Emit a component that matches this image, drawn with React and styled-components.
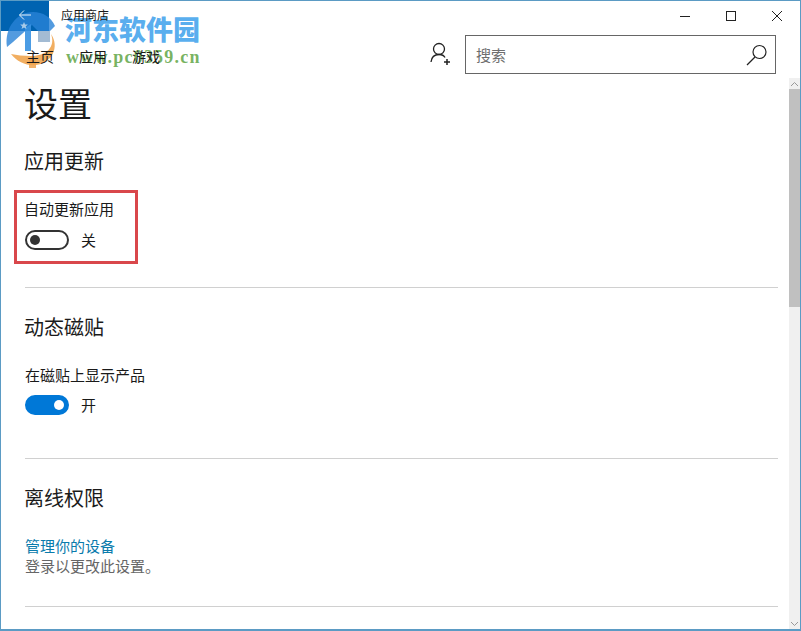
import React from "react";
import styled, { createGlobalStyle } from "styled-components";

const GlobalStyle = createGlobalStyle`
  html, body {
    margin: 0;
    padding: 0;
    background: #fff;
  }
  body {
    font-family: "Noto Sans CJK SC", "Liberation Sans", sans-serif;
    color: #1a1a1a;
  }
`;

const Window = styled.div`
  width: 801px;
  height: 631px;
  box-sizing: border-box;
  position: relative;
  overflow: hidden;
  background: #fff;
  border: 1px solid #5b9bc4;
  border-bottom-width: 2px;
  display: flex;
  flex-direction: column;
`;

const TitleBar = styled.div`
  height: 30px;
  flex: none;
  display: flex;
  align-items: stretch;
`;

const BackButton = styled.div`
  width: 48px;
  background: #0063b1;
  display: flex;
  align-items: center;
  justify-content: center;

  svg {
    position: relative;
    z-index: 1;
    margin-top: -3px;
  }
`;

const AppTitle = styled.div`
  margin-left: 12px;
  font-size: 12px;
  line-height: 28px;
  flex: 1;
  position: relative;
  z-index: 1;
`;

const WinButton = styled.div`
  width: 46px;
  display: flex;
  align-items: center;
  justify-content: center;
  margin-top: -1px;
`;

const NavBar = styled.div`
  height: 48px;
  flex: none;
  display: flex;
  align-items: center;
  padding: 0 24px 0 25px;
`;

const NavLinks = styled.div`
  display: flex;
  gap: 25px;
  flex: 1;
  font-size: 14px;
  margin-top: 1px;
  position: relative;
  z-index: 1;
`;

const UserIcon = styled.div`
  width: 26px;
  height: 26px;
  margin-right: 11px;
  margin-top: -2px;
`;

const SearchBox = styled.div`
  width: 311px;
  height: 39px;
  box-sizing: border-box;
  border: 1px solid #666;
  display: flex;
  align-items: center;
  justify-content: space-between;
  padding: 0 6px 0 10px;
  font-size: 15px;
  color: #6e6e6e;
  margin-top: -1px;
`;

const Body = styled.div`
  flex: 1;
  display: flex;
  min-height: 0;
`;

const Content = styled.div`
  flex: 1;
  padding: 0 11px 0 24px;
  min-width: 0;
`;

const PageTitle = styled.h1`
  margin: -1px 0 0 -1px;
  font-size: 34px;
  font-weight: 400;
  line-height: 50px;
`;

const SectionTitle = styled.h2`
  margin: ${(props) => props.$top}px 0 0 -1px;
  font-size: 20px;
  font-weight: 400;
  line-height: 30px;
`;

const Label = styled.div`
  font-size: 15px;
  line-height: 20px;
  margin-top: ${(props) => props.$top}px;
  margin-left: ${(props) => props.$left || 0}px;
`;

const ToggleRow = styled.div`
  display: flex;
  align-items: center;
  gap: 12px;
  margin-top: ${(props) => props.$top}px;
  font-size: 15px;
  line-height: 20px;
`;

const Track = styled.div`
  width: 44px;
  height: 20px;
  box-sizing: border-box;
  border-radius: 10px;
  border: 2px solid ${(props) => (props.$on ? "#0078d7" : "#333")};
  background: ${(props) => (props.$on ? "#0078d7" : "#fff")};
  display: flex;
  align-items: center;
  justify-content: ${(props) => (props.$on ? "flex-end" : "flex-start")};
  padding: 0 3px;
`;

const Knob = styled.div`
  width: 10px;
  height: 10px;
  border-radius: 50%;
  background: ${(props) => (props.$on ? "#fff" : "#333")};
`;

const Divider = styled.hr`
  border: 0;
  height: 1px;
  background: #d0d0d0;
  margin: ${(props) => props.$top}px 0 0;
`;

const DeviceLink = styled.div`
  font-size: 15px;
  line-height: 20px;
  color: #0a7bac;
  margin-top: 23px;
`;

const Note = styled.div`
  font-size: 15px;
  line-height: 20px;
  color: #666;
`;

const ScrollBar = styled.div`
  width: 11px;
  flex: none;
  background: #f0f0f0;
  display: flex;
  flex-direction: column;
  align-items: center;
  margin-top: -1px;
`;

const ScrollArrow = styled.div`
  height: 11px;
  flex: none;
  display: flex;
  align-items: center;
  justify-content: center;
`;

const ScrollThumb = styled.div`
  width: 100%;
  height: 218px;
  background: #c0c0c0;
`;

const ScrollGap = styled.div`
  flex: 1;
`;

const HighlightBox = styled.div`
  position: absolute;
  left: 13px;
  top: 189px;
  width: 124px;
  height: 74px;
  box-sizing: border-box;
  border: 3px solid #d9474b;
`;

const Watermark = styled.div`
  position: absolute;
  left: 0;
  top: 0;
  width: 210px;
  height: 72px;
  pointer-events: none;
`;

const WatermarkName = styled.div`
  position: absolute;
  left: 64px;
  top: 10px;
  font-family: "Noto Sans CJK SC", sans-serif;
  font-weight: 900;
  font-size: 27px;
  line-height: 36px;
  white-space: nowrap;
  color: rgba(60, 160, 235, 0.85);
`;

const WatermarkUrl = styled.div`
  position: absolute;
  left: 65px;
  top: 46px;
  font-family: "Liberation Serif", serif;
  font-weight: 700;
  font-size: 18px;
  line-height: 20px;
  letter-spacing: 1.2px;
  white-space: nowrap;
  color: rgba(95, 165, 70, 0.85);
`;

const App = () => {
  return (
    <Window>
      <GlobalStyle />
      <TitleBar>
        <BackButton>
          <svg width="14" height="12" viewBox="0 0 14 12" fill="none" stroke="#e8f2fa" strokeWidth="1">
            <path d="M13 6H1.500M6 1.500L1.500 6L6 10.500" />
          </svg>
        </BackButton>
        <AppTitle>应用商店</AppTitle>
        <WinButton>
          <svg width="12" height="12" viewBox="0 0 12 12" fill="none" stroke="#222" strokeWidth="1">
            <path d="M1 6.500H11" />
          </svg>
        </WinButton>
        <WinButton>
          <svg width="12" height="12" viewBox="0 0 12 12" fill="none" stroke="#222" strokeWidth="1">
            <rect x="1.500" y="1.500" width="9" height="9" />
          </svg>
        </WinButton>
        <WinButton>
          <svg width="12" height="12" viewBox="0 0 12 12" fill="none" stroke="#222" strokeWidth="1">
            <path d="M1 1L11 11M11 1L1 11" />
          </svg>
        </WinButton>
      </TitleBar>
      <NavBar>
        <NavLinks>
          <span>主页</span>
          <span>应用</span>
          <span>游戏</span>
        </NavLinks>
        <UserIcon>
          <svg width="26" height="26" viewBox="0 0 26 26" fill="none" stroke="#222" strokeWidth="1.3">
            <circle cx="11" cy="8" r="5.500" />
            <path d="M3 21c.5-4.500 3-7.500 8-7.500 3 0 5 1 6 3" />
            <path d="M19 18v6M16 21h6" strokeWidth="1.500" />
          </svg>
        </UserIcon>
        <SearchBox>
          <span>搜索</span>
          <svg width="24" height="24" viewBox="0 0 24 24" fill="none" stroke="#222" strokeWidth="1.2">
            <circle cx="14.500" cy="9" r="6.500" />
            <path d="M10 14L2 22" />
          </svg>
        </SearchBox>
      </NavBar>
      <Body>
        <Content>
          <PageTitle>设置</PageTitle>
          <SectionTitle $top={18}>应用更新</SectionTitle>
          <Label $top={23} $left={-1}>自动更新应用</Label>
          <ToggleRow $top={11}>
            <Track>
              <Knob />
            </Track>
            <span>关</span>
          </ToggleRow>
          <Divider $top={37} />
          <SectionTitle $top={24}>动态磁贴</SectionTitle>
          <Label $top={23}>在磁贴上显示产品</Label>
          <ToggleRow $top={10}>
            <Track $on>
              <Knob $on />
            </Track>
            <span>开</span>
          </ToggleRow>
          <Divider $top={43} />
          <SectionTitle $top={24}>离线权限</SectionTitle>
          <DeviceLink>管理你的设备</DeviceLink>
          <Note>登录以更改此设置。</Note>
          <Divider $top={30} />
        </Content>
        <ScrollBar>
          <ScrollArrow>
            <svg width="9" height="6" viewBox="0 0 9 6" fill="none" stroke="#999" strokeWidth="1">
              <path d="M1 5L4.500 1.500L8 5" />
            </svg>
          </ScrollArrow>
          <ScrollThumb />
          <ScrollGap />
          <ScrollArrow>
            <svg width="9" height="6" viewBox="0 0 9 6" fill="none" stroke="#999" strokeWidth="1">
              <path d="M1 1L4.500 4.500L8 1" />
            </svg>
          </ScrollArrow>
        </ScrollBar>
      </Body>
      <HighlightBox />
      <Watermark>
        <svg width="64" height="72" viewBox="0 0 64 72">
          <path d="M6 46C3 27 16 11 32 11c10 0 18 5 22 14l-5 5H37l-6-6-19 17z" fill="rgba(40,130,215,0.8)" />
          <path d="M24 27l6-4v27h-6z" fill="rgba(55,145,225,0.9)" />
          <path d="M37 30h12v11H37z" fill="rgba(140,170,200,0.8)" />
          <path d="M50 33c5 13-5 22-20 22-8 0-14-1-20-2 6 8 16 12 25 11 16-2 24-18 15-31z" fill="rgba(240,165,80,0.9)" />
          <path d="M28 57h7v10h-7z" fill="rgba(240,165,80,0.85)" />
          <path d="M23 21l1.100 2.600h2.700l-2.100 1.800.8 2.600-2.500-1.500-2.500 1.500.8-2.600-2.100-1.800h2.700z" fill="#a9cbe8" />
        </svg>
        <WatermarkName>河东软件园</WatermarkName>
        <WatermarkUrl>www.pc0359.cn</WatermarkUrl>
      </Watermark>
    </Window>
  );
};

export default App;
